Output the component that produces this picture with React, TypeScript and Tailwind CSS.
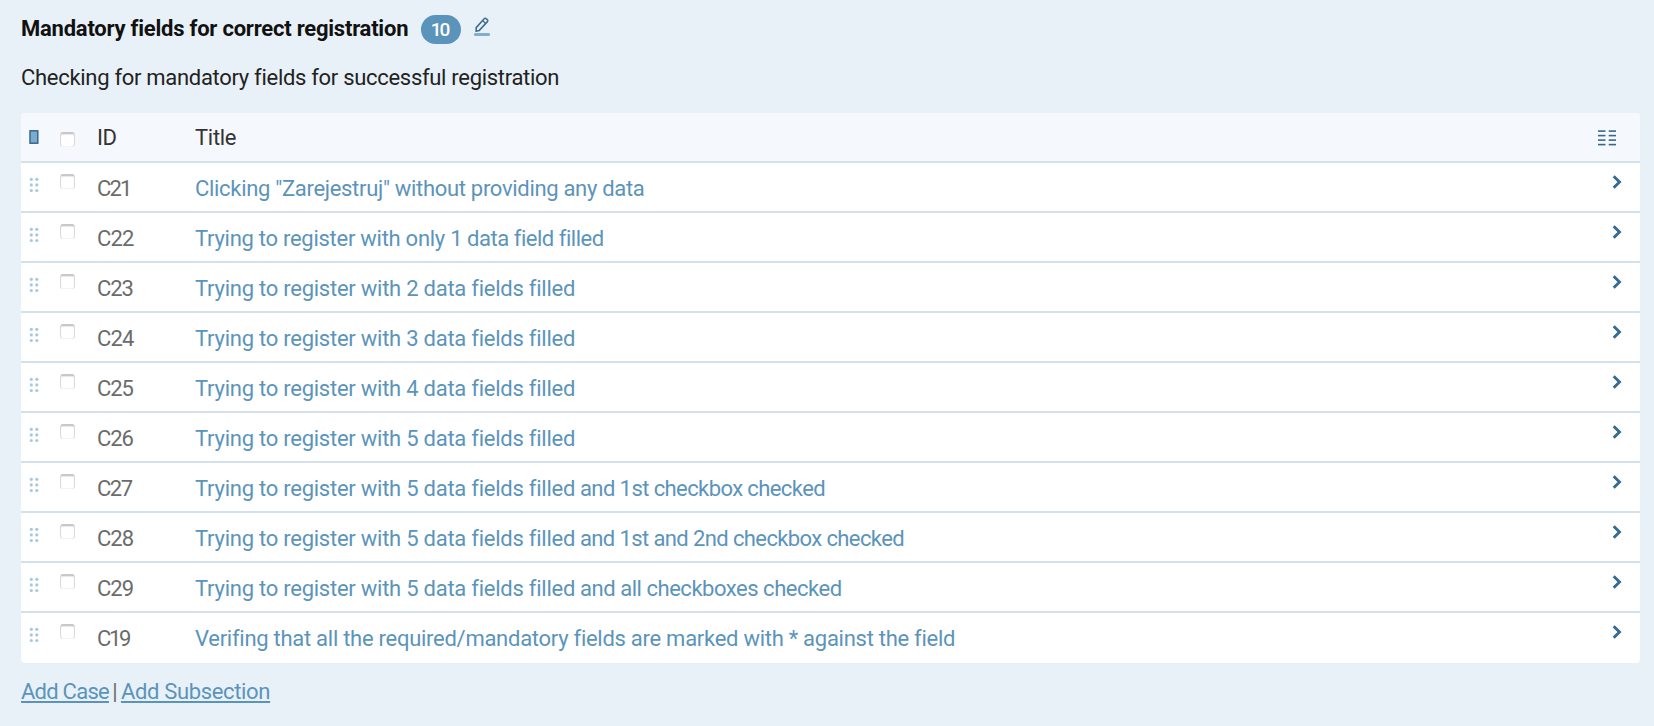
import React from "react";

type Segment = { text: string; tracking: string };
type TestCase = { id: string; idTracking: string; title: Segment[] };

const filled = (count: number): Segment => ({
  text: `Trying to register with ${count} data fields filled`,
  tracking: "tracking-[-0.245px]",
});

const cases: TestCase[] = [
  { id: "C21", idTracking: "tracking-[-1.8px]", title: [{ text: 'Clicking "Zarejestruj" without providing any data', tracking: "tracking-[-0.31px]" }] },
  {
    id: "C22",
    idTracking: "tracking-[-0.9px]",
    title: [
      { text: "Trying to register with only ", tracking: "tracking-[-0.27px]" },
      { text: "1 data field filled", tracking: "tracking-[-0.47px]" },
    ],
  },
  { id: "C23", idTracking: "tracking-[-1.1px]", title: [filled(2)] },
  { id: "C24", idTracking: "tracking-[-0.9px]", title: [filled(3)] },
  { id: "C25", idTracking: "tracking-[-1.1px]", title: [filled(4)] },
  { id: "C26", idTracking: "tracking-[-1.1px]", title: [filled(5)] },
  { id: "C27", idTracking: "tracking-[-1.5px]", title: [filled(5), { text: " and 1st checkbox checked", tracking: "tracking-[-0.59px]" }] },
  { id: "C28", idTracking: "tracking-[-1px]", title: [filled(5), { text: " and 1st and 2nd checkbox checked", tracking: "tracking-[-0.61px]" }] },
  { id: "C29", idTracking: "tracking-[-1px]", title: [filled(5), { text: " and all checkboxes checked", tracking: "tracking-[-0.47px]" }] },
  {
    id: "C19",
    idTracking: "tracking-[-2.4px]",
    title: [{ text: "Verifing that all the required/mandatory fields are marked with * against the field", tracking: "tracking-[-0.27px]" }],
  },
];

function PencilIcon() {
  return (
    <svg width="18" height="20" viewBox="0 0 18 20" fill="none" className="block">
      <path d="M3.2 10.6 11.2 1.7a1.3 1.3 0 0 1 1.9-.1l1.2 1.1a1.3 1.3 0 0 1 .1 1.9L6.3 13.4l-3.2.9z" stroke="#3f6f93" strokeWidth="1.6" strokeLinejoin="round" />
      <path d="m9.6 3.6 3 2.8" stroke="#3f6f93" strokeWidth="1.3" />
      <rect x="1" y="16" width="16" height="3" rx="1.2" fill="#82aece" />
    </svg>
  );
}

function DragHandle() {
  return (
    <svg width="10" height="16" viewBox="0 0 10 16" className="block" fill="#a9c8de">
      {[2.3, 7.9, 13.5].map((y) => (
        <g key={y}>
          <circle cx="2.3" cy={y} r="1.6" />
          <circle cx="7.8" cy={y} r="1.6" />
        </g>
      ))}
    </svg>
  );
}

function HeaderMarker() {
  return (
    <svg width="10" height="14" viewBox="0 0 10 14" className="block">
      <rect x="1" y="0.8" width="7.8" height="12.4" fill="#7bacd0" stroke="#37688c" strokeWidth="1.5" />
    </svg>
  );
}

function ColumnsIcon() {
  return (
    <svg width="18" height="16" viewBox="0 0 18 16" className="block" fill="#37688c">
      {[0.3, 4.8, 9.3, 13.8].map((y) => (
        <g key={y}>
          <rect x="0" y={y} width="7.5" height="1.6" />
          <rect x="10.7" y={y} width="7.3" height="1.6" />
        </g>
      ))}
    </svg>
  );
}

function Chevron() {
  return (
    <svg width="10" height="14" viewBox="0 0 10 14" className="block" fill="none">
      <path d="M1.7 1.200 7.500 7l-5.800 5.800" stroke="#376a90" strokeWidth="2.9" />
    </svg>
  );
}

function Checkbox() {
  return (
    <span className="block size-[15px] rounded-[3px] border-x border-t-2 border-x-[#dadada] border-t-[#c8c8c8] bg-white shadow-[inset_0_1px_1px_#e8e8e8,inset_0_-1px_0_#f4f4f4]" />
  );
}

export default function App() {
  return (
    <main className="h-[726px] overflow-hidden bg-[#e9f1f8] pl-[21px] pr-[14px] pt-[13px] font-['Roboto',sans-serif] text-[22px] leading-[30px]">
      <div className="flex h-8 items-start">
        <h1 className="w-[400px] whitespace-nowrap pt-px font-bold tracking-[-0.23px] text-[#111]">Mandatory fields for correct registration</h1>
        <span className="mt-[2px] flex h-[29px] w-10 items-center justify-center rounded-full bg-[#5b94bb] pr-[3px] text-[19px] font-medium tracking-[-2px] text-white">10</span>
        <span className="ml-3 mt-1">
          <PencilIcon />
        </span>
      </div>
      <p className="mt-[18px] whitespace-nowrap tracking-[-0.3px] text-[#222]">Checking for mandatory fields for successful registration</p>
      <section className="mt-5 overflow-hidden rounded-[4px] bg-white">
        <div className="flex h-[50px] border-b-2 border-[#d2e1ec] bg-[#f5f8fd] text-[#333]">
          <div className="w-[39px] pl-2 pt-[17px]">
            <HeaderMarker />
          </div>
          <div className="w-[37px] pt-[19px]">
            <Checkbox />
          </div>
          <div className="w-[98px] pt-[10px] tracking-[-0.5px]">ID</div>
          <div className="grow pt-[10px] tracking-[-0.3px]">Title</div>
          <div className="pr-6 pt-[17px]">
            <ColumnsIcon />
          </div>
        </div>
        {cases.map((item) => (
          <div key={item.id} className="flex h-[50px] border-b-2 border-[#d2e1ec] last:border-b-0">
            <div className="w-[39px] pl-2 pt-[14px]">
              <DragHandle />
            </div>
            <div className="w-[37px] pt-[11px]">
              <Checkbox />
            </div>
            <div className={`w-[98px] pt-[11px] text-[#6b6b6b] ${item.idTracking}`}>{item.id}</div>
            <div className="grow whitespace-nowrap pt-[11px] text-[#5b94bb]">
              <a>
                {item.title.map((segment) => (
                  <span key={segment.text} className={segment.tracking}>
                    {segment.text}
                  </span>
                ))}
              </a>
            </div>
            <div className="pr-[18px] pt-3">
              <Chevron />
            </div>
          </div>
        ))}
      </section>
      <footer className="mt-[14px] flex whitespace-nowrap text-[#5b94bb]">
        <a className="tracking-[-0.75px] underline decoration-[1.5px] underline-offset-2">Add Case</a>
        <span className="w-3 text-center text-[#6b6b6b]">|</span>
        <a className="tracking-[-0.34px] underline decoration-[1.5px] underline-offset-2">Add Subsection</a>
      </footer>
    </main>
  );
}
